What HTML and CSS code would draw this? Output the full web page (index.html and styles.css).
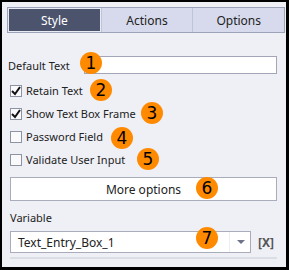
FILE: index.html
```html
<!DOCTYPE html>
<html lang="en">
<head>
  <meta charset="UTF-8">
  <title>Text Entry Box Properties</title>
  <link rel="stylesheet" href="styles.css">
</head>
<body>
  <div class="frame">
    <div class="tabs">
      <div class="tab active">Style</div>
      <div class="tab">Actions</div>
      <div class="tab">Options</div>
    </div>

    <div class="panel">
      <div class="row field-row">
        <span class="label">Default Text</span>
        <div class="text-input"></div>
      </div>
      <div class="row check-row">
        <span class="check checked"><svg width="10" height="10" viewBox="0 0 10 10"><path d="M1 5 L4 8 L9 1" fill="none" stroke="#111" stroke-width="2"/></svg></span>
        <span class="label">Retain Text</span>
      </div>
      <div class="row check-row">
        <span class="check checked"><svg width="10" height="10" viewBox="0 0 10 10"><path d="M1 5 L4 8 L9 1" fill="none" stroke="#111" stroke-width="2"/></svg></span>
        <span class="label">Show Text Box Frame</span>
      </div>
      <div class="row check-row">
        <span class="check"></span>
        <span class="label">Password Field</span>
      </div>
      <div class="row check-row">
        <span class="check"></span>
        <span class="label">Validate User Input</span>
      </div>

      <div class="button">More options</div>

      <div class="var-label">Variable</div>
      <div class="row var-row">
        <div class="select">
          <span class="select-text">Text_Entry_Box_1</span>
          <span class="select-arrow"></span>
        </div>
        <span class="clear">[X]</span>
      </div>
      <div class="rule"></div>
    </div>

    <!-- numbered callouts -->
    <span class="badge b1">1</span>
    <span class="badge b2">2</span>
    <span class="badge b3">3</span>
    <span class="badge b4">4</span>
    <span class="badge b5">5</span>
    <span class="badge b6">6</span>
    <span class="badge b7">7</span>
  </div>
</body>
</html>
```

FILE: styles.css
```css
body {
  margin: 0;
  font-family: "Noto Sans", Arial, sans-serif;
  font-size: 11px;
  color: #222;
}
.frame {
  width: 289px;
  height: 270px;
  box-sizing: border-box;
  border-style: solid;
  border-color: #000;
  border-width: 2px 3px 3px 2px;
  background-color: #eff0f6;
  padding: 5px 1px 0 5px;
  position: relative;
}
.tabs {
  display: flex;
  height: 26px;
  border: 1px solid #9ca2b8;
  box-sizing: border-box;
  background-color: #d6daec;
}
.tab {
  flex: 1;
  display: flex;
  align-items: center;
  justify-content: center;
  font-size: 12px;
  color: #222;
  border-left: 1px solid #bfc4d8;
}
.tab:first-child {
  border-left: none;
}
.tab.active {
  background-color: #4b536d;
  color: #fff;
  border: 1px solid #e9ebf4;
}
.panel {
  padding: 0 8px 0 1px;
}
.row {
  display: flex;
  align-items: center;
}
.field-row {
  margin-top: 23px;
  height: 18px;
}
.field-row .label {
  width: 76px;
}
.text-input {
  width: 194px;
  height: 18px;
  box-sizing: border-box;
  background-color: #fff;
  border: 1px solid #a2a6b6;
}
.check-row {
  height: 23px;
  padding-left: 2px;
}
.field-row + .check-row {
  margin-top: 5px;
}
.check {
  width: 12px;
  height: 12px;
  box-sizing: border-box;
  border: 1px solid #8e93a4;
  background-color: #fafafc;
  margin-right: 4px;
  display: flex;
  align-items: center;
  justify-content: center;
}
.button {
  margin-top: 6px;
  margin-left: 2px;
  height: 24px;
  box-sizing: border-box;
  border: 1px solid #a9adbb;
  background-color: #fff;
  display: flex;
  align-items: center;
  justify-content: center;
  font-size: 12px;
}
.var-label {
  margin-top: 9px;
  margin-left: 2px;
  height: 16px;
  line-height: 16px;
}
.var-row {
  margin-top: 5px;
  margin-left: 2px;
}
.select {
  width: 241px;
  height: 22px;
  box-sizing: border-box;
  border: 1px solid #a9adbb;
  background-color: #fff;
  display: flex;
  align-items: center;
  padding-left: 7px;
}
.select-text {
  flex: 1;
  font-size: 12px;
}
.select-arrow {
  width: 20px;
  height: 20px;
  border-left: 1px solid #eceef2;
  position: relative;
}
.select-arrow::after {
  content: "";
  position: absolute;
  left: 7px;
  top: 8px;
  border-left: 4px solid transparent;
  border-right: 4px solid transparent;
  border-top: 4px solid #6d7388;
}
.clear {
  margin-left: 7px;
  font-size: 12px;
  font-weight: bold;
  color: #555;
}
.rule {
  margin-top: 4px;
  margin-left: 2px;
  height: 2px;
  background-color: #dcdee6;
}
.badge {
  position: absolute;
  width: 22px;
  height: 22px;
  border-radius: 50%;
  background-color: #ff8a00;
  color: #000;
  font-size: 17px;
  line-height: 22px;
  text-align: center;
  font-family: "DejaVu Sans", sans-serif;
}
.b1 { left: 78px; top: 50px; }
.b2 { left: 88px; top: 77px; }
.b3 { left: 139px; top: 100px; }
.b4 { left: 109px; top: 125px; }
.b5 { left: 135px; top: 146px; }
.b6 { left: 194px; top: 175px; }
.b7 { left: 194px; top: 225px; }
```
